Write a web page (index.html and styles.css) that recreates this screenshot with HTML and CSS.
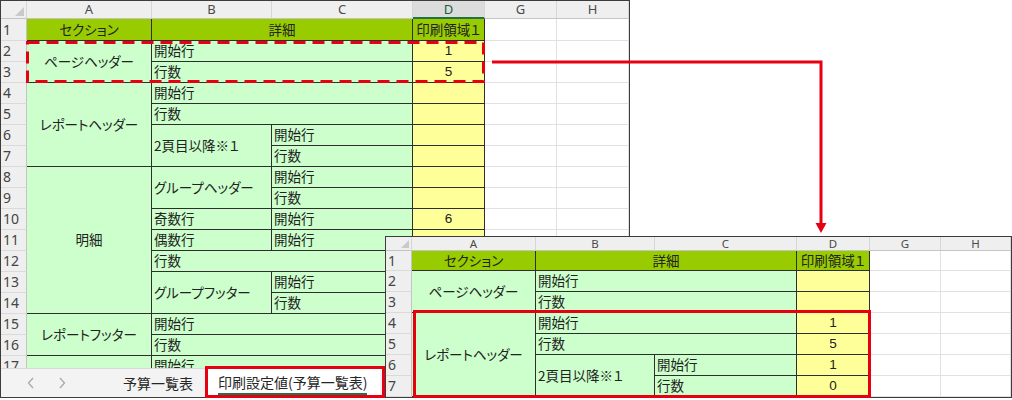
FILE: index.html
```html
<!DOCTYPE html>
<html lang="ja">
<head>
  <meta charset="UTF-8">
  <link rel="stylesheet" href="styles.css">
</head>
<body>
  <div class="canvas">

    <!-- 設定前のシート -->
    <div class="sheet sheet-before">
      <div class="sheet-body">
        <table class="grid">
          <colgroup>
            <col class="c-rh"><col class="c-a"><col class="c-b"><col class="c-c"><col class="c-d"><col class="c-g"><col class="c-h">
          </colgroup>
          <tr class="col-heads">
            <th class="corner"><svg width="9" height="9" viewBox="0 0 9 9"><polygon points="9,0 9,9 0,9" fill="#c9c9c9"/></svg></th>
            <th>A</th><th>B</th><th>C</th><th class="active">D</th><th>G</th><th>H</th>
          </tr>
          <tr class="row-title">
            <th class="rh">1</th>
            <td class="head">セクション</td>
            <td class="head" colspan="2">詳細</td>
            <td class="head">印刷領域１</td>
            <td class="blank"></td><td class="blank"></td>
          </tr>
          <tr>
            <th class="rh">2</th>
            <td class="sec" rowspan="2">ページヘッダー</td>
            <td class="item" colspan="2">開始行</td>
            <td class="val">1</td>
            <td class="blank"></td><td class="blank"></td>
          </tr>
          <tr>
            <th class="rh">3</th>
            <td class="item" colspan="2">行数</td>
            <td class="val">5</td>
            <td class="blank"></td><td class="blank"></td>
          </tr>
          <tr>
            <th class="rh">4</th>
            <td class="sec" rowspan="4">レポートヘッダー</td>
            <td class="item" colspan="2">開始行</td>
            <td class="val"></td>
            <td class="blank"></td><td class="blank"></td>
          </tr>
          <tr>
            <th class="rh">5</th>
            <td class="item" colspan="2">行数</td>
            <td class="val"></td>
            <td class="blank"></td><td class="blank"></td>
          </tr>
          <tr>
            <th class="rh">6</th>
            <td class="item" rowspan="2">2頁目以降※１</td>
            <td class="item">開始行</td>
            <td class="val"></td>
            <td class="blank"></td><td class="blank"></td>
          </tr>
          <tr>
            <th class="rh">7</th>
            <td class="item">行数</td>
            <td class="val"></td>
            <td class="blank"></td><td class="blank"></td>
          </tr>
          <tr>
            <th class="rh">8</th>
            <td class="sec" rowspan="7">明細</td>
            <td class="item" rowspan="2">グループヘッダー</td>
            <td class="item">開始行</td>
            <td class="val"></td>
            <td class="blank"></td><td class="blank"></td>
          </tr>
          <tr>
            <th class="rh">9</th>
            <td class="item">行数</td>
            <td class="val"></td>
            <td class="blank"></td><td class="blank"></td>
          </tr>
          <tr>
            <th class="rh">10</th>
            <td class="item">奇数行</td>
            <td class="item">開始行</td>
            <td class="val">6</td>
            <td class="blank"></td><td class="blank"></td>
          </tr>
          <tr>
            <th class="rh">11</th>
            <td class="item">偶数行</td>
            <td class="item">開始行</td>
            <td class="val"></td>
            <td class="blank"></td><td class="blank"></td>
          </tr>
          <tr>
            <th class="rh">12</th>
            <td class="item" colspan="2">行数</td>
            <td class="val"></td>
            <td class="blank"></td><td class="blank"></td>
          </tr>
          <tr>
            <th class="rh">13</th>
            <td class="item" rowspan="2">グループフッター</td>
            <td class="item">開始行</td>
            <td class="val"></td>
            <td class="blank"></td><td class="blank"></td>
          </tr>
          <tr>
            <th class="rh">14</th>
            <td class="item">行数</td>
            <td class="val"></td>
            <td class="blank"></td><td class="blank"></td>
          </tr>
          <tr>
            <th class="rh">15</th>
            <td class="sec" rowspan="2">レポートフッター</td>
            <td class="item" colspan="2">開始行</td>
            <td class="val"></td>
            <td class="blank"></td><td class="blank"></td>
          </tr>
          <tr>
            <th class="rh">16</th>
            <td class="item" colspan="2">行数</td>
            <td class="val"></td>
            <td class="blank"></td><td class="blank"></td>
          </tr>
          <tr>
            <th class="rh">17</th>
            <td class="sec"></td>
            <td class="item" colspan="2">開始行</td>
            <td class="val"></td>
            <td class="blank"></td><td class="blank"></td>
          </tr>
        </table>
      </div>

      <div class="tabs">
        <div class="tab-nav">
          <svg width="8" height="12" viewBox="0 0 8 12"><polyline points="6,1 1.5,6 6,11" fill="none" stroke="#a9a9a9" stroke-width="1.3"/></svg>
          <svg width="8" height="12" viewBox="0 0 8 12"><polyline points="2,1 6.5,6 2,11" fill="none" stroke="#a9a9a9" stroke-width="1.3"/></svg>
        </div>
        <div class="tab">予算一覧表</div>
        <div class="tab tab-active"><span>印刷設定値(予算一覧表)</span></div>
      </div>
    </div>

    <!-- 設定後のシート -->
    <div class="sheet sheet-after">
      <div class="sheet-body">
        <table class="grid">
          <colgroup>
            <col class="c-rh"><col class="c-a"><col class="c-b"><col class="c-c"><col class="c-d"><col class="c-g"><col class="c-h">
          </colgroup>
          <tr class="col-heads">
            <th class="corner"><svg width="8" height="8" viewBox="0 0 8 8"><polygon points="8,0 8,8 0,8" fill="#c9c9c9"/></svg></th>
            <th>A</th><th>B</th><th>C</th><th>D</th><th>G</th><th>H</th>
          </tr>
          <tr class="row-title">
            <th class="rh">1</th>
            <td class="head">セクション</td>
            <td class="head" colspan="2">詳細</td>
            <td class="head">印刷領域１</td>
            <td class="blank"></td><td class="blank"></td>
          </tr>
          <tr>
            <th class="rh">2</th>
            <td class="sec" rowspan="2">ページヘッダー</td>
            <td class="item" colspan="2">開始行</td>
            <td class="val"></td>
            <td class="blank"></td><td class="blank"></td>
          </tr>
          <tr>
            <th class="rh">3</th>
            <td class="item" colspan="2">行数</td>
            <td class="val"></td>
            <td class="blank"></td><td class="blank"></td>
          </tr>
          <tr>
            <th class="rh">4</th>
            <td class="sec" rowspan="4">レポートヘッダー</td>
            <td class="item" colspan="2">開始行</td>
            <td class="val">1</td>
            <td class="blank"></td><td class="blank"></td>
          </tr>
          <tr>
            <th class="rh">5</th>
            <td class="item" colspan="2">行数</td>
            <td class="val">5</td>
            <td class="blank"></td><td class="blank"></td>
          </tr>
          <tr>
            <th class="rh">6</th>
            <td class="item" rowspan="2">2頁目以降※１</td>
            <td class="item">開始行</td>
            <td class="val">1</td>
            <td class="blank"></td><td class="blank"></td>
          </tr>
          <tr>
            <th class="rh">7</th>
            <td class="item">行数</td>
            <td class="val">0</td>
            <td class="blank"></td><td class="blank"></td>
          </tr>
        </table>
      </div>
    </div>

    <!-- 注釈（枠線と矢印） -->
    <svg class="marks" width="1012" height="400" viewBox="0 0 1012 400">
      <rect x="27.5" y="42.5" width="456" height="39" fill="none" stroke="#e60012" stroke-width="3" stroke-dasharray="12 7"/>
      <path d="M492 62 H821 V224" fill="none" stroke="#e60012" stroke-width="3"/>
      <polygon points="815.5,223 826.5,223 821,233" fill="#e60012"/>
      <rect x="414.5" y="311.5" width="455" height="85" fill="none" stroke="#e60012" stroke-width="3"/>
      <rect x="206.5" y="367.5" width="177" height="29" fill="none" stroke="#e60012" stroke-width="3"/>
    </svg>
  </div>
</body>
</html>
```

FILE: styles.css
```css
* {
  margin: 0;
  padding: 0;
  box-sizing: border-box;
}

body {
  background: #ffffff;
  font-family: "Noto Sans CJK JP", sans-serif;
  color: #222;
}

.canvas {
  position: relative;
  width: 1012px;
  height: 400px;
  overflow: hidden;
}

/* シートの窓 */
.sheet {
  position: absolute;
  background: #ffffff;
  border: 1px solid #3c3c3c;
  display: flex;
  flex-direction: column;
}

.sheet-before {
  left: 0;
  top: 0;
  width: 630px;
  height: 398px;
}

.sheet-after {
  left: 385px;
  top: 236px;
  width: 627px;
  height: 162px;
}

.sheet-body {
  flex: 1;
  overflow: hidden;
}

/* 列幅 */
.sheet-before .c-rh { width: 26px; }
.sheet-before .c-a { width: 125px; }
.sheet-before .c-b { width: 120px; }
.sheet-before .c-c { width: 141px; }
.sheet-before .c-d { width: 72px; }
.sheet-before .c-g { width: 72px; }
.sheet-before .c-h { width: 72px; }

.sheet-after .c-rh { width: 26px; }
.sheet-after .c-a { width: 124px; }
.sheet-after .c-b { width: 119px; }
.sheet-after .c-c { width: 142px; }
.sheet-after .c-d { width: 73px; }
.sheet-after .c-g { width: 71px; }
.sheet-after .c-h { width: 70px; }

/* セル */
.grid {
  width: 100%;
  table-layout: fixed;
  border-collapse: separate;
  border-spacing: 0;
  font-size: 13.5px;
  font-feature-settings: "palt";
}

.grid td,
.grid th {
  height: 21px;
  padding: 0 2px;
  white-space: nowrap;
  overflow: hidden;
  font-weight: normal;
  line-height: 1;
  vertical-align: middle;
}

.col-heads th {
  height: 18px;
  background: #efefef;
  border-right: 1px solid #d6d6d6;
  border-bottom: 1px solid #c4c4c4;
  font-family: "Noto Sans", sans-serif;
  font-size: 13px;
  color: #4a4a4a;
  text-align: center;
}

.col-heads th.active {
  background: #dcdcdc;
  color: #1b5e3a;
  border-bottom: 2px solid #217346;
}

.col-heads th.corner {
  text-align: right;
  vertical-align: bottom;
  padding: 0 2px 2px 0;
}

.col-heads th.corner svg {
  display: block;
  margin-left: auto;
}

.row-title td,
.row-title th {
  height: 22px;
}

.sheet-after .col-heads th {
  height: 14px;
  font-size: 11.5px;
}

.sheet-after .row-title td,
.sheet-after .row-title th {
  height: 20px;
}

.grid th.rh {
  background: #efefef;
  border-right: 1px solid #c4c4c4;
  border-bottom: 1px solid #dadada;
  font-family: "Noto Sans", sans-serif;
  font-size: 14px;
  color: #444;
  text-align: left;
  padding-left: 2px;
}

.head,
.sec,
.item,
.val {
  border-right: 1px solid #2e2e2e;
  border-bottom: 1px solid #2e2e2e;
}

.head {
  background: #99cc00;
  text-align: center;
  padding: 0;
}

.sec {
  background: #ccffcc;
  text-align: center;
}

.item {
  background: #ccffcc;
  text-align: left;
}

.val {
  background: #ffff99;
  text-align: center;
  font-family: "Liberation Sans", sans-serif;
  font-size: 13.5px;
}

.blank {
  border-right: 1px solid #e1e1e1;
  border-bottom: 1px solid #e1e1e1;
}

/* シート見出しのバー */
.tabs {
  flex: none;
  height: 29px;
  display: flex;
  align-items: stretch;
  background: #f3f3f3;
  border-top: 1px solid #d9d9d9;
  font-size: 14px;
  color: #262626;
}

.tab-nav {
  display: flex;
  align-items: center;
  gap: 23px;
  padding-left: 26px;
  width: 110px;
}

.tab {
  display: flex;
  align-items: center;
  padding: 0 12px;
}

.tab-active {
  background: #ffffff;
  padding: 0 13px;
}

.tab-active span {
  border-bottom: 2px solid #217346;
  padding-bottom: 1px;
}

/* 注釈 */
.marks {
  position: absolute;
  left: 0;
  top: 0;
  pointer-events: none;
}
```
